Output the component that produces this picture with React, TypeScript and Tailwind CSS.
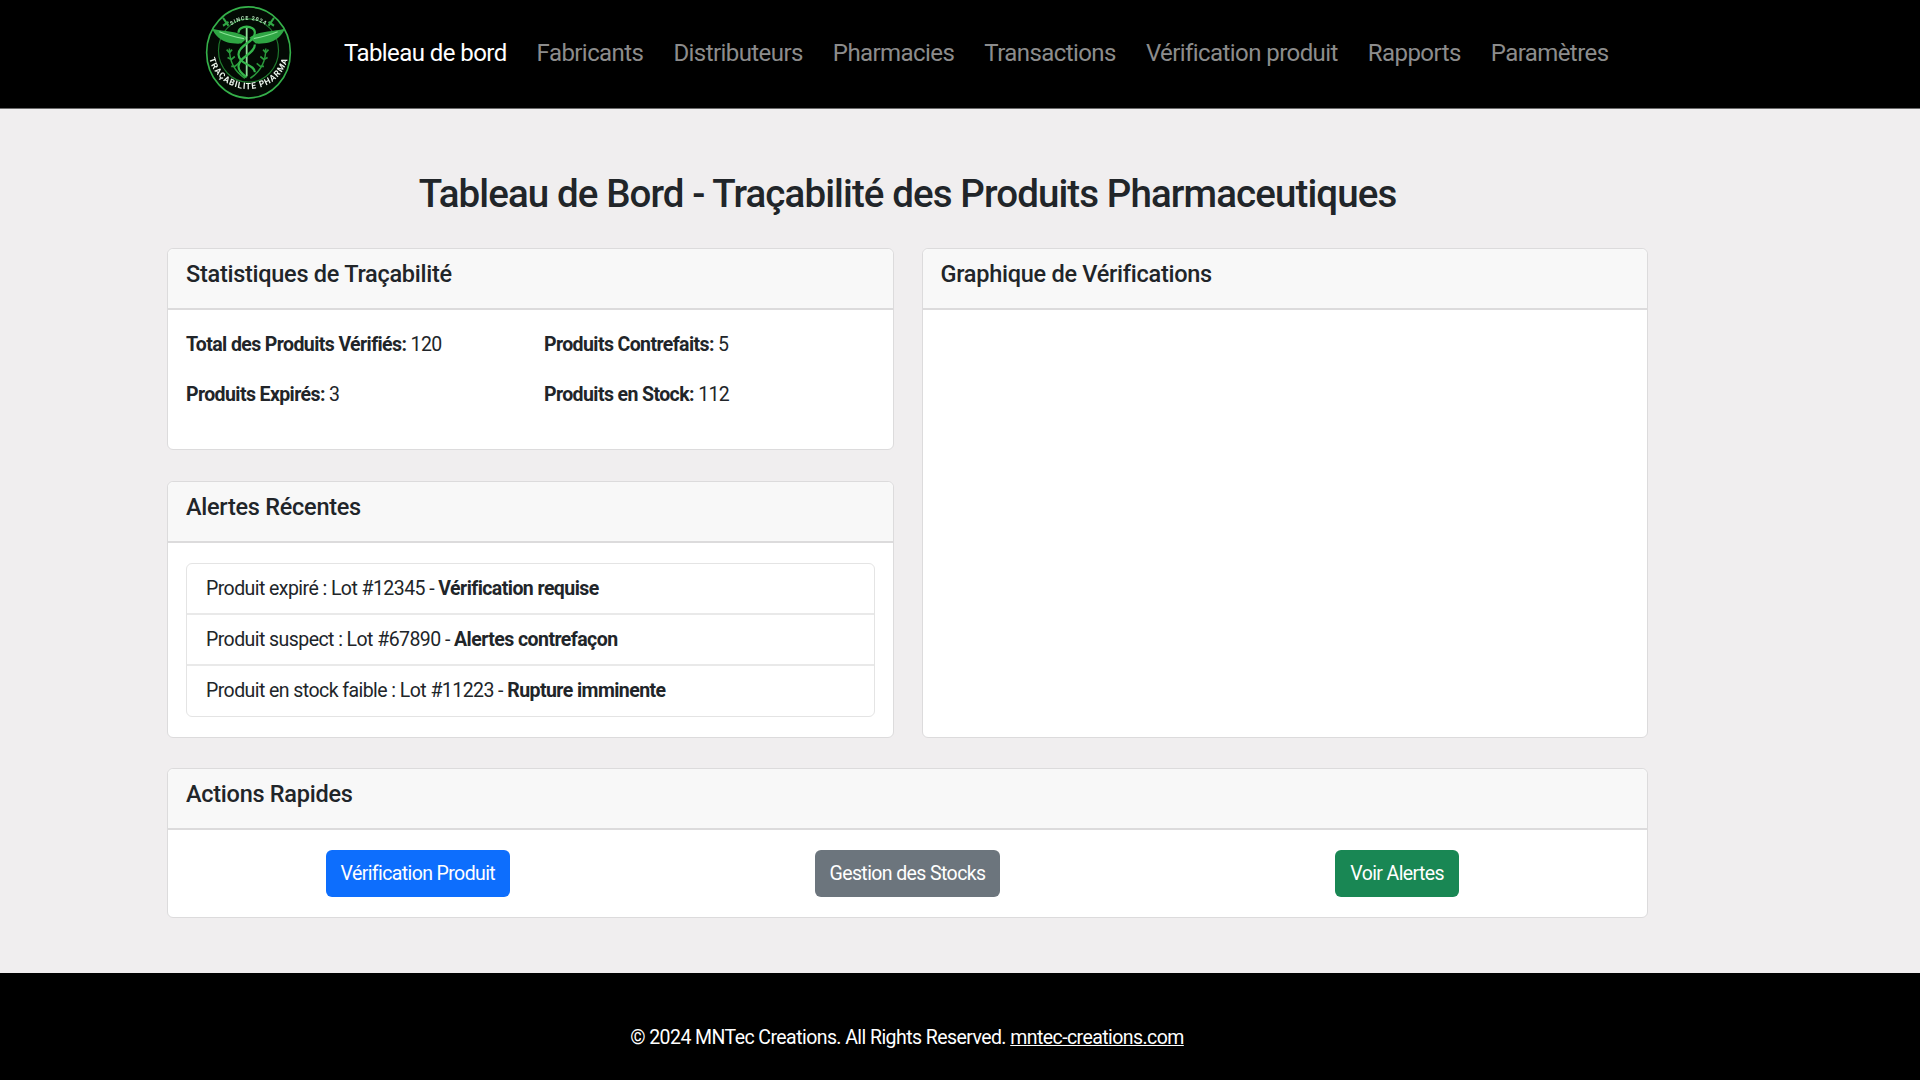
import React from 'react'

const navItems = ['Tableau de bord', 'Fabricants', 'Distributeurs', 'Pharmacies', 'Transactions', 'Vérification produit', 'Rapports', 'Paramètres']

const Logo: React.FC = () => (
  <svg viewBox="0 0 100 100" preserveAspectRatio="none" className="w-[91px] h-[99px] blur-[0.5px]">
    <ellipse cx="50" cy="50" rx="46" ry="46" fill="#030a04" stroke="#35b04a" strokeWidth="1.8" />
    <ellipse cx="50" cy="48" rx="33" ry="32" fill="none" stroke="#1f7a2e" strokeWidth="1.3" />
    <defs>
      <path id="logo-top" d="M24 30 A30 26 0 0 1 76 30" />
      <path id="logo-bottom" d="M6 48 A44 39 0 0 0 94 48" />
    </defs>
    {/* ailes */}
    <path d="M49 35 C38 28 24 29 10 26 C14 34 22 42 42 41 Z" fill="#2fa644" />
    <path d="M51 35 C62 28 76 29 90 26 C86 34 78 42 58 41 Z" fill="#2fa644" />
    <path d="M45 36 C34 34 26 32 18 29 M55 36 C66 34 74 32 82 29" fill="none" stroke="#8ae296" strokeWidth="1.2" />
    {/* feuilles du haut */}
    <path d="M22 15 l6 8 M22 23 l6 -4 M78 15 l-6 8 M78 23 l-6 -4" stroke="#2fa644" strokeWidth="2.2" fill="none" />
    {/* caducée */}
    <path d="M48 24 V74" stroke="#8fe09a" strokeWidth="2" fill="none" />
    <path d="M39 30 C39 22 57 22 57 30 C57 40 39 42 39 52 C39 62 57 62 57 70" fill="none" stroke="#35b64b" strokeWidth="2.4" />
    <path d="M57 42 C57 52 39 54 39 64 C39 70 45 73 48 75" fill="none" stroke="#35b64b" strokeWidth="2.4" />
    {/* branches */}
    <path d="M29 46 C29 60 36 70 46 76 M69 46 C69 60 62 70 52 76" fill="none" stroke="#2a9a3c" strokeWidth="1.6" />
    <path d="M29 50 l-3 -3 M29 50 l3 -3 M31 57 l-4 -2 M31 57 l4 -3 M35 64 l-4 0 M35 64 l4 -3 M69 50 l3 -3 M69 50 l-3 -3 M67 57 l4 -2 M67 57 l-4 -3 M63 64 l4 0 M63 64 l-4 -3" stroke="#2a9a3c" strokeWidth="1.8" fill="none" />
    <text fontSize="5.6" fontWeight="700" fill="#b8e6bd" fontFamily="Roboto, sans-serif" letterSpacing="1">
      <textPath href="#logo-top" startOffset="50%" textAnchor="middle">SINCE 2024</textPath>
    </text>
    <text fontSize="9" fontWeight="700" fill="#eef7ef" fontFamily="Roboto, sans-serif" letterSpacing="1">
      <textPath href="#logo-bottom" startOffset="50%" textAnchor="middle">TRAÇABILITE PHARMA</textPath>
    </text>
  </svg>
)

const Card: React.FC<{ title: string; className?: string; children?: React.ReactNode }> = ({ title, className, children }) => (
  <div className={`bg-white border border-[#dcdbdc] rounded-[6px] flex flex-col ${className ?? ''}`}>
    <div className="h-[61px] shrink-0 bg-[#f8f8f8] border-b-2 border-[#dcdbdc] rounded-t-[6px] pl-[18px] pt-[8px] text-[23.5px] font-medium leading-[34px] tracking-[-0.27px] text-[#212529]">
      {title}
    </div>
    {children}
  </div>
)

const Stat: React.FC<{ label: string; value: string }> = ({ label, value }) => (
  <p><strong className="font-bold">{label}:</strong> {value}</p>
)

const alerts = [
  { text: 'Produit expiré : Lot #12345 - ', strong: 'Vérification requise' },
  { text: 'Produit suspect : Lot #67890 - ', strong: 'Alertes contrefaçon' },
  { text: 'Produit en stock faible : Lot #11223 - ', strong: 'Rupture imminente' },
]

export default function App() {
  return (
    <div className="min-h-[1080px] flex flex-col bg-[#f0eeef] font-['Roboto',sans-serif] text-[19.5px] tracking-[-0.6px] text-[#212529]">
      {/* Navigation */}
      <header className="h-[109px] bg-black border-b border-[#6b6b6b] flex items-start">
        <div className="ml-[203px] mt-[3px]"><Logo /></div>
        <nav className="ml-[50px] mt-[35px] flex gap-[30px] text-[24px] leading-[36px] tracking-[-0.57px]">
          {navItems.map((item, i) => (
            <a key={item} href="#" className={i === 0 ? 'text-white' : 'text-[#8c8c8c]'}>{item}</a>
          ))}
        </nav>
      </header>

      <main className="ml-[167px] w-[1481px] flex-1">
        <h1 className="mt-[58px] mb-[28px] h-[53px] text-center text-[38.5px] font-medium leading-[53px] tracking-[-0.9px]">
          Tableau de Bord - Traçabilité des Produits Pharmaceutiques
        </h1>

        <div className="grid grid-cols-2 gap-[28px]">
          <div className="flex flex-col gap-[31px]">
            <Card title="Statistiques de Traçabilité" className="h-[202px]">
              <div className="pl-[18px] pt-[23px] grid grid-cols-[358px_1fr] gap-y-[26px] leading-[24px]">
                <Stat label="Total des Produits Vérifiés" value="120" />
                <Stat label="Produits Contrefaits" value="5" />
                <Stat label="Produits Expirés" value="3" />
                <Stat label="Produits en Stock" value="112" />
              </div>
            </Card>
            <Card title="Alertes Récentes" className="h-[257px]">
              <ul className="mx-[18px] mt-[20px] border border-[#e4e4e4] rounded-[6px] divide-y-2 divide-[#e9e9e9] tracking-[-0.56px]">
                {alerts.map((a) => (
                  <li key={a.strong} className="h-[51px] last:h-[50px] pl-[19px] flex items-center whitespace-pre">
                    {a.text}<strong className="font-bold">{a.strong}</strong>
                  </li>
                ))}
              </ul>
            </Card>
          </div>
          <Card title="Graphique de Vérifications" />
        </div>

        <Card title="Actions Rapides" className="mt-[30px] h-[150px]">
          <div className="px-[5px] pt-[20px] grid grid-cols-3 justify-items-center">
            <button className="h-[47px] px-[15px] rounded-[6px] bg-[#0d6efd] text-white">Vérification Produit</button>
            <button className="h-[47px] px-[14px] rounded-[6px] bg-[#6c757d] text-white">Gestion des Stocks</button>
            <button className="h-[47px] px-[15px] rounded-[6px] bg-[#198754] text-white">Voir Alertes</button>
          </div>
        </Card>
      </main>

      <footer className="h-[107px] bg-black text-white flex items-center pt-[22px]">
        <p className="w-[1814px] text-center tracking-[-0.57px]">
          © 2024 MNTec Creations. All Rights Reserved. <a href="#" className="underline">mntec-creations.com</a>
        </p>
      </footer>
    </div>
  )
}
